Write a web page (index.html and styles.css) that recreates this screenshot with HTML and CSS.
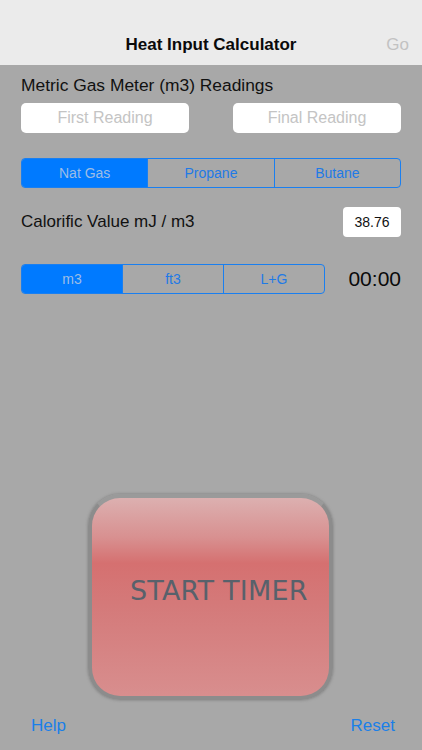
FILE: index.html
```html
<!DOCTYPE html>
<html>
<head>
<meta charset="utf-8">
<link rel="stylesheet" href="styles.css">
</head>
<body>
<div class="app">
  <header class="nav">
    <div class="nav-title">Heat Input Calculator</div>
    <div class="nav-go">Go</div>
  </header>
  <main class="content">
    <div class="section-label">Metric Gas Meter (m3) Readings</div>
    <div class="readings">
      <div class="field">First Reading</div>
      <div class="field">Final Reading</div>
    </div>
    <div class="seg seg-gas">
      <div class="seg-item active">Nat Gas</div>
      <div class="seg-item">Propane</div>
      <div class="seg-item">Butane</div>
    </div>
    <div class="cv-row">
      <div class="cv-label">Calorific Value mJ / m3</div>
      <div class="cv-box">38.76</div>
    </div>
    <div class="unit-row">
      <div class="seg seg-unit">
        <div class="seg-item active">m3</div>
        <div class="seg-item">ft3</div>
        <div class="seg-item">L+G</div>
      </div>
      <div class="timer">00:00</div>
    </div>
    <div class="spacer"></div>
    <div class="btn-wrap">
      <div class="start-btn"><span class="start-text">START TIMER</span></div>
    </div>
  </main>
  <footer class="toolbar">
    <div class="tool">Help</div>
    <div class="tool">Reset</div>
  </footer>
</div>
</body>
</html>
```
FILE: styles.css
```css
* { box-sizing: border-box; }
html, body { margin: 0; padding: 0; }
body {
  width: 422px;
  height: 750px;
  overflow: hidden;
  font-family: "Liberation Sans", Arial, sans-serif;
  background: #a8a8a8;
}
.app {
  width: 422px;
  height: 750px;
  display: flex;
  flex-direction: column;
}
.nav {
  height: 65px;
  background: #ebebeb;
  position: relative;
  display: flex;
  align-items: flex-end;
  justify-content: center;
  padding-bottom: 10px;
}
.nav-title {
  font-size: 17px;
  font-weight: bold;
  color: #0a0a0a;
}
.nav-go {
  position: absolute;
  right: 13px;
  bottom: 10px;
  font-size: 17px;
  color: #c2c2c2;
}
.content {
  flex: 1;
  display: flex;
  flex-direction: column;
  padding: 10px 21px 0 21px;
}
.section-label {
  font-size: 17.4px;
  color: #111;
  line-height: 20px;
}
.readings {
  display: flex;
  justify-content: space-between;
  margin-top: 8px;
}
.field {
  width: 168px;
  height: 30px;
  background: #fff;
  border-radius: 5px;
  color: #c4c4c4;
  font-size: 16px;
  display: flex;
  align-items: center;
  justify-content: center;
}
.seg {
  display: flex;
  border: 1px solid #1a7ff0;
  border-radius: 4px;
  overflow: hidden;
  height: 30px;
}
.seg-gas {
  margin-top: 25px;
}
.seg-item {
  flex: 1;
  display: flex;
  align-items: center;
  justify-content: center;
  font-size: 14px;
  color: #1f7ae6;
  border-left: 1px solid #1a7ff0;
}
.seg-item:first-child { border-left: none; }
.seg-item.active {
  background: #007aff;
  color: #9dbde6;
}
.cv-row {
  display: flex;
  justify-content: space-between;
  align-items: center;
  margin-top: 19px;
}
.cv-label {
  font-size: 17px;
  color: #111;
}
.cv-box {
  width: 58px;
  height: 30px;
  background: #fff;
  border-radius: 4px;
  font-size: 14px;
  color: #111;
  display: flex;
  align-items: center;
  justify-content: center;
}
.unit-row {
  display: flex;
  justify-content: space-between;
  align-items: center;
  margin-top: 27px;
}
.seg-unit {
  width: 304px;
}
.timer {
  font-size: 21px;
  color: #0a0a0a;
}
.spacer { flex: 1; }
.btn-wrap {
  display: flex;
  padding-left: 67px;
  margin-bottom: 2px;
}
.start-btn {
  width: 245px;
  height: 206px;
  border-radius: 32px;
  border: 4px solid #8c8c8c;
  border-top-color: #9a9a9a;
  background: linear-gradient(to bottom, #dcb0b0 0%, #d89090 20%, #d57070 33%, #d47a7a 55%, #d88e8e 100%);
  box-shadow: 0 0 3px rgba(90,90,90,0.6);
  display: flex;
  align-items: center;
  padding-left: 38px;
  padding-bottom: 14px;
}
.start-text {
  font-family: "DejaVu Sans", Verdana, sans-serif;
  font-size: 27px;
  color: #58616b;
  letter-spacing: 0.2px;
}
.toolbar {
  height: 48px;
  display: flex;
  justify-content: space-between;
  align-items: center;
  padding: 0 27px 0 31px;
}
.tool {
  font-size: 17px;
  color: #1a7fe8;
}
```
